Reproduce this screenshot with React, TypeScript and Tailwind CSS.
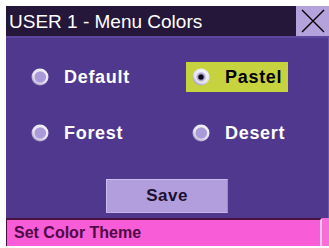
import React from 'react';

const options = [
  { name: 'Default', selected: false },
  { name: 'Pastel', selected: true },
  { name: 'Forest', selected: false },
  { name: 'Desert', selected: false },
];

function Radio({ checked }: { checked: boolean }) {
  return (
    <svg width="18" height="18" viewBox="0 0 18 18" className="shrink-0">
      <defs>
        <radialGradient id={checked ? 'ringOn' : 'ringOff'} cx="0.6" cy="0.35" r="0.7">
          <stop offset="0" stopColor="#ffffff" />
          <stop offset="0.7" stopColor="#e4e0f2" />
          <stop offset="1" stopColor="#9a92b8" />
        </radialGradient>
        <radialGradient id="dotHalo" cx="0.5" cy="0.5" r="0.5">
          <stop offset="0.3" stopColor="#6a5a9a" />
          <stop offset="1" stopColor="#f4f2fa" />
        </radialGradient>
      </defs>
      <circle cx="9" cy="9" r="8.5" fill={checked ? 'url(#ringOn)' : 'url(#ringOff)'} />
      {checked ? (
        <>
          <circle cx="9" cy="9" r="5.5" fill="url(#dotHalo)" />
          <circle cx="9" cy="9" r="2.6" fill="#0a0a14" />
        </>
      ) : (
        <circle cx="9.3" cy="9" r="5.8" fill="#a99bd9" />
      )}
    </svg>
  );
}

function Option({ name, selected }: { name: string; selected: boolean }) {
  return (
    <div
      className={`flex items-center h-[30px] gap-[15px] pl-[6px] ${
        selected ? 'bg-[#c6d33f] w-[102px] text-black' : 'text-white'
      }`}
    >
      <Radio checked={selected} />
      <span className="text-[18px] font-bold tracking-[0.7px] leading-none">{name}</span>
    </div>
  );
}

export default function App() {
  return (
    <div
      className="w-[329px] h-[248px] bg-white pl-[6px] pt-[6px] overflow-hidden"
      style={{ fontFamily: '"Liberation Sans", Arial, sans-serif' }}
    >
      {/* Header */}
      <div className="flex h-[30px] bg-[#241739]">
        <div className="flex-1 flex items-center pl-[3px] text-white text-[19px] leading-none">
          USER 1 - Menu Colors
        </div>
        <button className="w-[33px] h-[30px] bg-[#b3a2dc] flex items-center justify-center">
          <svg width="24" height="24" viewBox="0 0 24 24">
            <path d="M1 1 L23 23 M23 1 L1 23" stroke="#000" strokeWidth="1.4" fill="none" />
          </svg>
        </button>
      </div>

      {/* Body */}
      <div className="h-[182px] bg-[#50388f] border-t-2 border-[#5d46a0] border-r border-r-[#6a55ad] flex flex-col pt-[24px]">
        <div className="grid grid-cols-[161px_auto] gap-y-[26px] pl-[19px]">
          {options.map((o) => (
            <Option key={o.name} name={o.name} selected={o.selected} />
          ))}
        </div>
        <button className="mt-[31px] mx-auto w-[122px] h-[34px] bg-[#b29edc] border border-t-[#cbbdee] border-l-[#cbbdee] border-r-[#9c88cc] border-b-[#c4b4e8] text-[#1a1030] text-[17px] font-bold tracking-[0.5px]">
          Save
        </button>
      </div>

      {/* Status bar */}
      <div className="flex h-[28px] bg-[#f46fd8]">
        <div className="w-[316px] flex items-center bg-[#f85cd6] border-t-2 border-l border-t-[#4a1040] border-l-[#4a1040] border-r-2 border-r-[#f3c6ea] pl-[7px] text-[#4e0a46] text-[16px] font-bold leading-none">
          Set Color Theme
        </div>
      </div>
    </div>
  );
}
